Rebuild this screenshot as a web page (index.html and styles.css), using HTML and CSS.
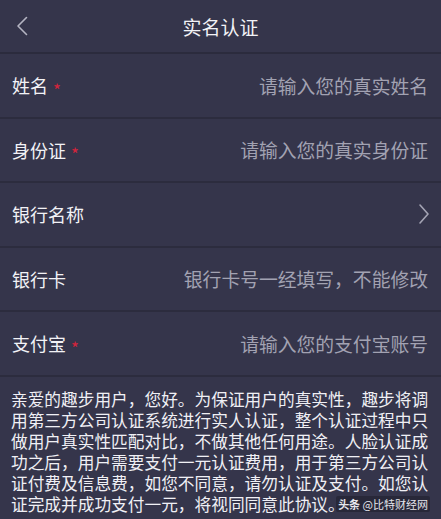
FILE: index.html
```html
<!DOCTYPE html>
<html lang="zh-CN">
<head>
<meta charset="utf-8">
<title>实名认证</title>
<link rel="stylesheet" href="styles.css">
</head>
<body>
<div class="page">
  <header class="header">
    <svg class="back" width="14" height="20" viewBox="0 0 14 20"><path d="M11.5 1.5 L3 10 L11.5 18.5" fill="none" stroke="#b4b4c2" stroke-width="1.6" stroke-linecap="round" stroke-linejoin="round"/></svg>
    <h1 class="title">实名认证</h1>
  </header>
  <div class="row">
    <div class="label">姓名<span class="req">*</span></div>
    <div class="ph">请输入您的真实姓名</div>
  </div>
  <div class="row">
    <div class="label">身份证<span class="req">*</span></div>
    <div class="ph">请输入您的真实身份证</div>
  </div>
  <div class="row">
    <div class="label">银行名称</div>
    <svg class="chev" width="12" height="22" viewBox="0 0 12 22"><path d="M2 2 L10 11 L2 20" fill="none" stroke="#a4a4b4" stroke-width="1.6" stroke-linecap="round" stroke-linejoin="round"/></svg>
  </div>
  <div class="row">
    <div class="label">银行卡</div>
    <div class="ph">银行卡号一经填写，不能修改</div>
  </div>
  <div class="row">
    <div class="label">支付宝<span class="req">*</span></div>
    <div class="ph">请输入您的支付宝账号</div>
  </div>
  <p class="notice">亲爱的趣步用户，您好。为保证用户的真实性，趣步将调<br>用第三方公司认证系统进行实人认证，整个认证过程中只<br>做用户真实性匹配对比，不做其他任何用途。人脸认证成<br>功之后，用户需要支付一元认证费用，用于第三方公司认<br>证付费及信息费，如您不同意，请勿认证及支付。如您认<br>证完成并成功支付一元，将视同同意此协议。</p>
  <div class="mark"><b>头条</b> @比特财经网</div>
</div>
</body>
</html>
```
FILE: styles.css
```css
html, body {
  margin: 0;
  padding: 0;
  background: #35354b;
}
body {
  font-family: "Noto Sans CJK SC", "Noto Sans", sans-serif;
  color: #f0f0f5;
}
.page {
  position: relative;
  width: 441px;
  height: 519px;
  overflow: hidden;
  background: #35354b;
}
.header {
  height: 52px;
  display: flex;
  align-items: center;
  justify-content: center;
  position: relative;
  border-bottom: 2px solid #2b2b3d;
}
.back {
  position: absolute;
  left: 15px;
  top: 16px;
}
.title {
  margin: 0;
  font-size: 19px;
  font-weight: 400;
  color: #f2f2f6;
}
.row {
  height: 62.5px;
  display: flex;
  align-items: center;
  justify-content: space-between;
  padding: 0 13px 0 12px;
  border-bottom: 2px solid #2c2c3e;
}
.label {
  font-size: 18px;
  color: #f2f2f6;
  display: flex;
  align-items: center;
}
.req {
  color: #d3243c;
  font-size: 17px;
  line-height: 1;
  margin-left: 5px;
  margin-top: 8px;
}
.ph {
  font-size: 18.8px;
  color: #a2a2b2;
}
.chev {
  margin-right: -2px;
}
.notice {
  margin: 0;
  padding: 12px 0 0 11px;
  font-size: 16.7px;
  line-height: 21px;
  white-space: nowrap;
  color: #f0f0f5;
}
.mark {
  position: absolute;
  right: 11px;
  top: 496px;
  font-size: 11px;
  line-height: 16px;
  padding: 0 2px;
  color: #e6e6ec;
  background: rgba(30, 30, 44, 0.55);
  border-radius: 2px;
}
.mark b {
  font-weight: 700;
}
```
